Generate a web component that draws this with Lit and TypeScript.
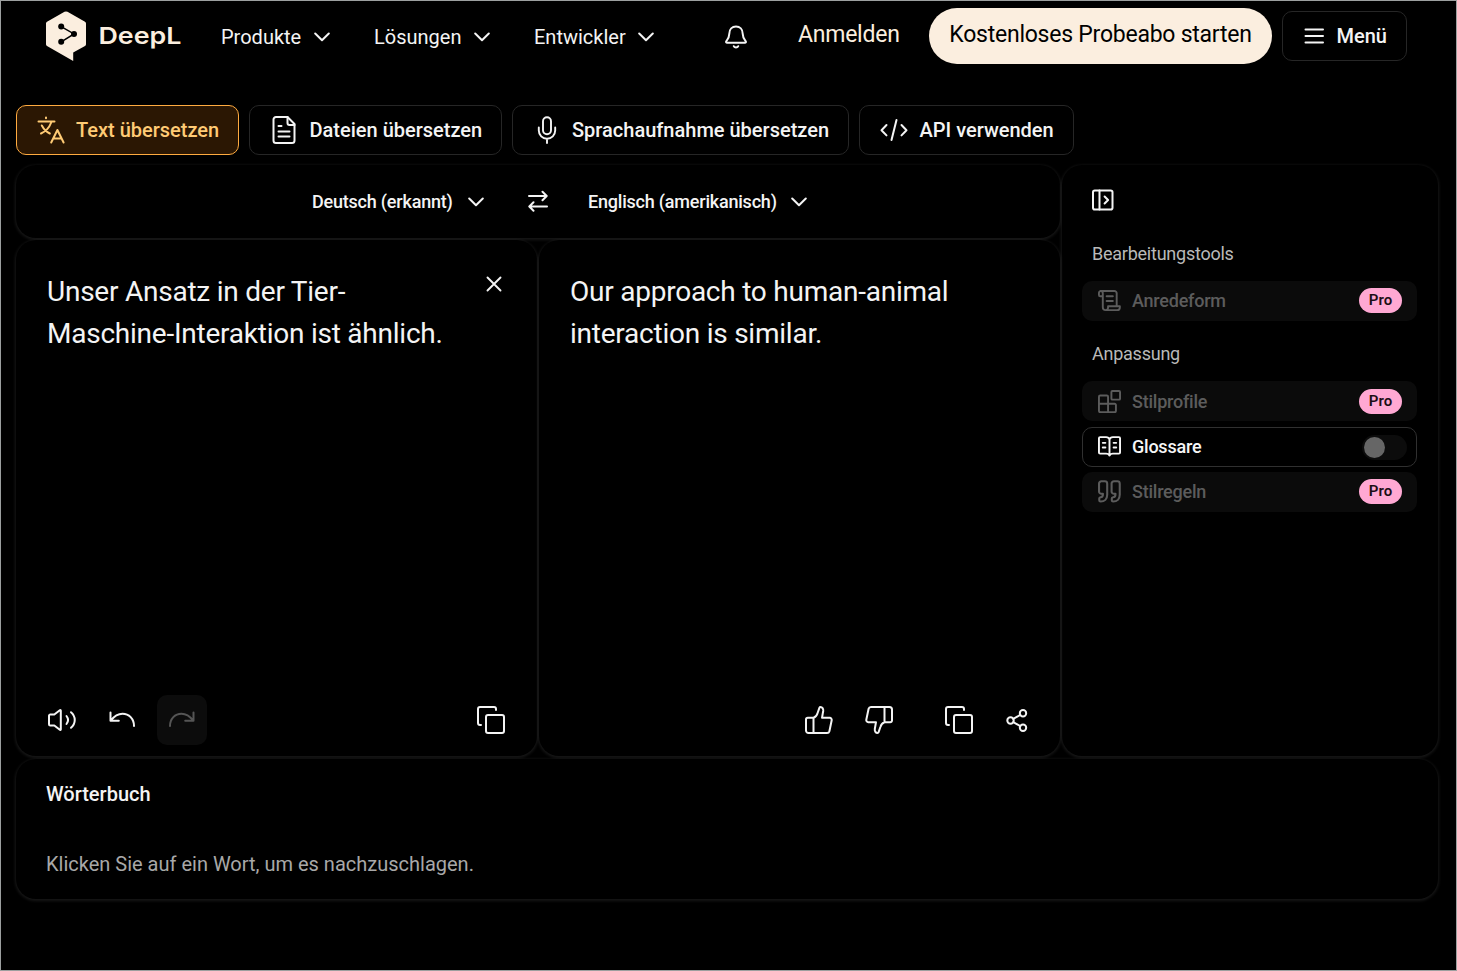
import { LitElement, html, css, svg } from "lit";
import { customElement, property } from "lit/decorators.js";

const ICONS: Record<string, { box: string; body: unknown }> = {
  chevron: { box: "0 0 16 10", body: svg`<path d="M1.2 1.5 8 8.200l6.800-6.700"/>` },
  bell: {
    box: "0 0 22 24",
    body: svg`<path d="M1.300 16.200C2.700 14.300 4.300 12.500 4.300 8.700 4.300 4.300 7.200 1.500 11 1.500s6.700 2.800 6.700 7.200c0 3.800 1.600 5.600 3 7.500.5.800.1 1.600-.8 1.600H2.100c-.9 0-1.300-.8-.8-1.600Z"/><path d="M8.800 21.200c.5.900 1.300 1.300 2.200 1.300s1.700-.4 2.200-1.300"/>`,
  },
  menu: { box: "0 0 20 16", body: svg`<path d="M1.500 1.500h17.500M1.500 8h17.500M1.500 14.500h17.500"/>` },
  translate: {
    box: "0 0 28 28",
    body: svg`<path d="M1.500 5.500h16M9 1.600v.6M14.200 6.500C12.500 11 8.500 15.500 4 17.500M4.800 9.500c2 3.700 4.700 6.500 8 8M14.200 26.500l6.200-12.500L26.600 26.500M16.500 22.500h7.800"/>`,
  },
  file: {
    box: "0 0 24 28",
    body: svg`<path d="M15.500 1H4a2.500 2.500 0 0 0-2.500 2.500v21A2.500 2.500 0 0 0 4 27h16a2.500 2.500 0 0 0 2.500-2.500V8L15.500 1Z"/><path d="M15.500 1v6a2 2 0 0 0 2 2h5M6.500 10h3M6.500 15.500h11M6.500 20.500h11"/>`,
  },
  mic: {
    box: "0 0 20 28",
    body: svg`<rect x="6" y="1.200" width="8" height="17" rx="4"/><path d="M1.800 11.500v3a8.200 8.200 0 0 0 16.400 0v-3M10 22.800V27"/>`,
  },
  code: { box: "0 0 28 24", body: svg`<path d="m6.500 7-5 5.200 5 5.200M21.500 7l5 5.200-5 5.200M16.500 2l-5 20"/>` },
  swap: { box: "0 0 20 22", body: svg`<path d="M1 6h17.500M14.500 1.800 18.700 6l-4.200 4.200M19 16.500H1.500M5.500 12.300 1.300 16.500l4.200 4.200"/>` },
  close: { box: "0 0 16 16", body: svg`<path d="m1.500 1.500 13 13M14.500 1.500l-13 13"/>` },
  collapse: {
    box: "0 0 22 22",
    body: svg`<rect x="1" y="1.500" width="19.500" height="19" rx="1.800"/><path d="M7.500 1.500v19M12.600 7.500l3.500 3.500-3.500 3.500"/>`,
  },
  scroll: {
    box: "0 0 24 22",
    body: svg`<path d="M5 6.500V18a3 3 0 0 0 3 3h12a2.800 2.800 0 0 0 2.800-2.800V17H10.500v1.500A2.500 2.500 0 0 1 8 21M5 6.500H2.300A1.300 1.300 0 0 1 1 5.200V3.500A2.300 2.300 0 0 1 3.200 1H17a2.500 2.500 0 0 1 2.500 2.500V17M3 1c1.300 0 2 1 2 2.500v3M9 6.500h6.500M9 11.500h6.500"/>`,
  },
  blocks: {
    box: "0 0 24 24",
    body: svg`<rect x="14" y="1" width="9" height="9" rx="1"/><path d="M10.500 23.200V7A1.300 1.300 0 0 0 9.200 5.700H2.300A1.300 1.300 0 0 0 1 7v14.700a1.500 1.500 0 0 0 1.500 1.500h14.700a1.500 1.500 0 0 0 1.500-1.500v-6.100a1.300 1.300 0 0 0-1.300-1.300H1"/>`,
  },
  book: {
    box: "0 0 24 22",
    body: svg`<path d="M12 3.800v16.500M12 3.800C11.500 2 10 1.200 8.500 1.200H2.200A1.200 1.200 0 0 0 1 2.400v14.800a1.200 1.200 0 0 0 1.200 1.200h6.300c1.600 0 2.800.7 3.500 2 .7-1.300 1.900-2 3.500-2h6.300a1.200 1.200 0 0 0 1.200-1.200V2.400a1.200 1.200 0 0 0-1.200-1.200h-6.300C14 1.200 12.500 2 12 3.800ZM5 7.200h2.700M5 12h2.700M16.300 7.200H19M16.300 12H19"/>`,
  },
  quote: {
    box: "0 0 22 22",
    body: svg`<path d="M3.200 1.200h3.300A2.300 2.300 0 0 1 8.800 3.500V14c0 4.200-2.600 6.600-6.300 6.600-.8 0-1.300-.4-1.300-1.200v-1.600c0-.8.5-1.200 1.300-1.300 1.400-.2 2.200-1 2.200-2.700v-.6H3.200A2.200 2.200 0 0 1 1 11V3.400a2.200 2.200 0 0 1 2.200-2.200ZM15.200 1.200h3.300a2.300 2.300 0 0 1 2.300 2.300V14c0 4.200-2.600 6.600-6.300 6.600-.8 0-1.300-.4-1.300-1.200v-1.600c0-.8.5-1.200 1.300-1.300 1.400-.2 2.200-1 2.200-2.700v-.6h-1.500A2.200 2.200 0 0 1 13 11V3.400a2.200 2.200 0 0 1 2.200-2.200Z"/>`,
  },
  speaker: {
    box: "0 0 28 24",
    body: svg`<path d="M2.300 6.500h4l5.500-4.300c.5-.4 1-.1 1 .5v18.500c0 .6-.5 1-1 .6L6.300 17.500h-4A1.300 1.300 0 0 1 1 16.200V7.800A1.300 1.300 0 0 1 2.300 6.500ZM18.500 8c1.800 2.300 1.800 5.700 0 8M23 4.200c5 4.300 5 11.300 0 15.600"/>`,
  },
  undo: { box: "0 0 26 18", body: svg`<path d="M1.500 1.500v8.300h8.300M1.800 9.500C5.500 4.800 9.500 2.700 13.500 2.700c6.500 0 11.500 5 11.500 12.300"/>` },
  redo: { box: "0 0 26 18", body: svg`<path d="M24.500 1.500v8.300h-8.300M24.200 9.500C20.500 4.800 16.500 2.700 12.500 2.700 6 2.700 1 7.700 1 15"/>` },
  copy: {
    box: "0 0 28 28",
    body: svg`<rect x="9" y="9" width="18" height="18" rx="2"/><path d="M4 19H3a2 2 0 0 1-2-2V3a2 2 0 0 1 2-2h14a2 2 0 0 1 2 2v1"/>`,
  },
  up: {
    box: "0 0 28 28",
    body: svg`<path d="M8.500 11.800H2.800A1.800 1.800 0 0 0 1 13.600v10.900A2.500 2.500 0 0 0 3.500 27H22a2.500 2.500 0 0 0 2.400-1.800l2.300-11a2 2 0 0 0-2-2.400H17L18.200 5c.3-2.200-1-4-2.700-4-.6 0-.9.300-1.100.8L12.600 7c-.7 2.700-2 4.200-4.100 4.800ZM8.500 11.800V27"/>`,
  },
  down: {
    box: "0 0 28 28",
    body: svg`<path d="M19.500 16.200h5.700a1.800 1.800 0 0 0 1.800-1.800V3.500A2.500 2.500 0 0 0 24.500 1H6a2.500 2.500 0 0 0-2.400 1.800l-2.300 11a2 2 0 0 0 2 2.400H11L9.800 23c-.3 2.200 1 4 2.700 4 .6 0 .9-.3 1.100-.8l1.800-5.200c.7-2.700 2-4.200 4.100-4.800ZM19.500 16.200V1"/>`,
  },
  share: {
    box: "0 0 22 24",
    body: svg`<circle cx="17" cy="5.200" r="3.200"/><circle cx="4.500" cy="12.500" r="3.200"/><circle cx="17" cy="19.800" r="3.200"/><path d="m7.300 10.800 7-3.900M7.300 14.200l7 3.900"/>`,
  },
};

@customElement("ui-icon")
export class UiIcon extends LitElement {
  @property() name = "chevron";

  static styles = css`
    :host { display: block; flex: none; }
    .icon { display: block; width: 100%; height: 100%; fill: none; stroke: currentColor; stroke-width: var(--stroke, 2); stroke-linecap: round; stroke-linejoin: round; }
  `;

  render() {
    const icon = ICONS[this.name];
    return html`<svg class="icon" viewBox=${icon.box} aria-hidden="true">${icon.body}</svg>`;
  }
}

@customElement("app-root")
export class AppRoot extends LitElement {
  static styles = css`
    :host { display: block; font-family: Roboto, "Liberation Sans", sans-serif; color: #f4f4f4; }
    * { box-sizing: border-box; }
    .page { height: 971px; border: 1px solid #9c9f9f; background: #000; overflow: hidden; padding-left: 15px; white-space: nowrap; }
    .header { display: flex; align-items: flex-start; height: 104px; padding-left: 30px; font-size: 20px; line-height: 30px; }
    .mark { width: 40px; height: 50px; margin-top: 10px; flex: none; }
    .brand { width: 123px; height: 40px; margin: 15px 0 0 12px; overflow: visible; flex: none; }
    .word { font: 600 23.500px Inter, sans-serif; fill: #fbeedf; }
    .nav { display: flex; align-items: center; justify-content: space-between; margin-top: 21px; height: 30px; flex: none; }
    .n1 { width: 108.500px; }
    .n2 { width: 115.500px; margin-left: 44.500px; }
    .n3 { width: 119.500px; margin-left: 44.500px; }
    .chev { width: 16px; height: 10px; --stroke: 2; }
    .bell { width: 22px; height: 24px; margin: 23.500px 0 0 71px; --stroke: 2; }
    .login { width: 102px; margin: 19px 0 0 51.500px; font-size: 23px; letter-spacing: -0.24px; color: #fbeedf; flex: none; }
    .cta { width: 343px; height: 56px; margin: 7px 0 0 29px; border-radius: 28px; background: #fbeedf; color: #000; font-size: 23px; letter-spacing: -0.24px; line-height: 54px; text-align: center; flex: none; }
    .menu { display: flex; align-items: center; width: 125px; height: 50px; margin: 10px 0 0 10px; padding-left: 21px; border: 1px solid #262626; border-radius: 10px; font-weight: 500; flex: none; }
    .burger { width: 20px; height: 16px; margin-right: 12.500px; --stroke: 2; }
    .tabs { display: flex; gap: 10px; height: 60px; font-size: 20px; font-weight: 500; }
    .tab { display: flex; align-items: center; height: 50px; border: 1px solid #262626; border-radius: 10px; padding-left: 20px; }
    .t1 { width: 223px; background: #2b1703; border-color: #ffab40; color: #ffcb75; }
    .t2 { width: 253px; padding-left: 22px; }
    .t3 { width: 337px; padding-left: 24px; }
    .t4 { width: 215px; }
    .i1 { width: 28px; height: 28px; margin-right: 11px; }
    .i2 { width: 24px; height: 28px; margin-right: 13.500px; }
    .i3 { width: 20px; height: 28px; margin-right: 15px; --stroke: 1.9; }
    .i4 { width: 28px; height: 24px; margin-right: 11.500px; --stroke: 2; }
    .work { display: grid; grid-template-columns: 521px 521px 376px; grid-template-rows: 73px 516px 141px; column-gap: 2px; row-gap: 2px; }
    .card { border-radius: 20px; background: #000; box-shadow: 0 1px 3px 1px rgba(255, 255, 255, 0.09); }
    .langs { grid-column: 1 / 3; display: flex; align-items: center; padding-left: 296px; font-size: 18px; font-weight: 500; letter-spacing: -0.21px; }
    .l1 { width: 155.500px; }
    .l2 { width: 202.500px; }
    .swap { width: 20px; height: 22px; margin: 0 40px 1px 44.500px; --stroke: 2; }
    .side { grid-column: 3; grid-row: 1 / 3; padding: 24px 21px 0 20px; }
    .collapse { width: 22px; height: 22px; margin-left: 10px; --stroke: 2; }
    .heading { margin: 31px 0 15px 10px; color: #b9b9b9; font-size: 18px; line-height: 24px; letter-spacing: -0.24px; }
    .second { margin-top: 21px; }
    .tool { display: flex; align-items: center; height: 40px; margin-bottom: 5px; padding: 0 15px 1px; border-radius: 10px; background: #0b0b0b; color: #5c5c5c; font-size: 18px; font-weight: 500; line-height: 21px; letter-spacing: -0.23px; }
    .gap { margin-bottom: 6px; padding-bottom: 0; }
    .on { background: #000; border: 1px solid #303030; color: #f6f6f6; padding: 0 9px 1px 14px; }
    .ti { width: 23px; height: 23px; margin: 0 11px 0 1px; --stroke: 2; }
    .pro { margin-left: auto; width: 43px; height: 25px; border-radius: 13px; background: #ffa8d3; color: #1c0e15; text-align: center; font-size: 15px; font-weight: 600; line-height: 25px; letter-spacing: 0; }
    .switch { margin: 1px 0 0 auto; width: 45px; height: 25px; padding: 2px; border-radius: 13px; background: #0c0c0c; }
    .knob { width: 21px; height: 21px; border-radius: 50%; background: #666; }
    .pane { display: flex; flex-direction: column; justify-content: space-between; padding: 31px 31px 11px; }
    .row { display: flex; justify-content: space-between; }
    .text { margin: 0; font-size: 28px; line-height: 42px; letter-spacing: -0.235px; }
    .close { width: 16px; height: 16px; margin: 4.500px 4.500px 0 0; --stroke: 1.9; }
    .actions { display: flex; align-items: center; height: 50px; }
    .speaker { width: 28px; height: 24px; margin-left: 1px; --stroke: 2; }
    .undo { width: 26px; height: 18px; margin-left: 33px; --stroke: 2; }
    .redobox { display: grid; place-items: center; width: 50px; height: 50px; margin-left: 22px; border-radius: 10px; background: #0c0c0c; color: #555; }
    .redo { width: 26px; height: 18px; --stroke: 2; }
    .copy { width: 28px; height: 28px; margin: 0 1px 0 auto; --stroke: 2; }
    .right { justify-content: flex-end; padding-right: 1px; }
    .thumb { width: 28px; height: 28px; margin-right: 33px; --stroke: 2; }
    .second-thumb { width: 28px; height: 28px; margin: 0 33px 0 -1px; --stroke: 2; }
    .rcopy { width: 28px; height: 28px; margin: 0 33px 0 19px; --stroke: 2; }
    .share { width: 22px; height: 24px; --stroke: 2; }
    .dict { grid-column: 1 / 4; margin-top: 1px; padding: 20px 30px; font-size: 20px; line-height: 30px; }
    .title { font-weight: 500; margin-bottom: 40px; }
    .hint { color: #a8a8a8; }
  `;

  private tool(name: string, label: string, extra = "") {
    return html`<div class="tool ${extra}"><ui-icon class="ti" name=${name}></ui-icon><span>${label}</span><span class="pro">Pro</span></div>`;
  }

  render() {
    return html`
      <div class="page">
        <header class="header">
          <svg class="mark" viewBox="0 0 40 50.500" preserveAspectRatio="none">
            <path fill="#fbeedf" d="M18.500.8q1.500-.8 3 0L39 10.800q1 .6 1 1.700v21q0 1.200-1 1.800L27.200 42v8.500L1 35.300q-1-.6-1-1.800v-21q0-1.100 1-1.700Z"/>
            <path d="m15.200 15.700 12.800 7.500-12.800 7.900" fill="none" stroke="#000" stroke-width="1.500"/>
            <circle cx="15.200" cy="15.700" r="3"/><circle cx="28" cy="23.200" r="3"/><circle cx="15.200" cy="31.100" r="3"/>
          </svg>
          <svg class="brand" viewBox="0 0 123 40"><text class="word" x="0.500" y="27.500" textLength="83" lengthAdjust="spacingAndGlyphs">DeepL</text></svg>
          <div class="nav n1"><span>Produkte</span><ui-icon class="chev"></ui-icon></div>
          <div class="nav n2"><span>Lösungen</span><ui-icon class="chev"></ui-icon></div>
          <div class="nav n3"><span>Entwickler</span><ui-icon class="chev"></ui-icon></div>
          <ui-icon class="bell" name="bell"></ui-icon>
          <span class="login">Anmelden</span>
          <span class="cta">Kostenloses Probeabo starten</span>
          <span class="menu"><ui-icon class="burger" name="menu"></ui-icon>Menü</span>
        </header>
        <nav class="tabs">
          <span class="tab t1"><ui-icon class="i1" name="translate"></ui-icon>Text übersetzen</span>
          <span class="tab t2"><ui-icon class="i2" name="file"></ui-icon>Dateien übersetzen</span>
          <span class="tab t3"><ui-icon class="i3" name="mic"></ui-icon>Sprachaufnahme übersetzen</span>
          <span class="tab t4"><ui-icon class="i4" name="code"></ui-icon>API verwenden</span>
        </nav>
        <main class="work">
          <section class="card langs">
            <span class="l1">Deutsch (erkannt)</span><ui-icon class="chev"></ui-icon>
            <ui-icon class="swap" name="swap"></ui-icon>
            <span class="l2">Englisch (amerikanisch)</span><ui-icon class="chev"></ui-icon>
          </section>
          <aside class="card side">
            <ui-icon class="collapse" name="collapse"></ui-icon>
            <div class="heading">Bearbeitungstools</div>
            ${this.tool("scroll", "Anredeform")}
            <div class="heading second">Anpassung</div>
            ${this.tool("blocks", "Stilprofile", "gap")}
            <div class="tool on"><ui-icon class="ti" name="book"></ui-icon><span>Glossare</span><span class="switch"><div class="knob"></div></span></div>
            ${this.tool("quote", "Stilregeln")}
          </aside>
          <section class="card pane">
            <div class="row">
              <p class="text">Unser Ansatz in der Tier-<br>Maschine-Interaktion ist ähnlich.</p>
              <ui-icon class="close" name="close"></ui-icon>
            </div>
            <div class="actions">
              <ui-icon class="speaker" name="speaker"></ui-icon>
              <ui-icon class="undo" name="undo"></ui-icon>
              <span class="redobox"><ui-icon class="redo" name="redo"></ui-icon></span>
              <ui-icon class="copy" name="copy"></ui-icon>
            </div>
          </section>
          <section class="card pane">
            <p class="text">Our approach to human-animal<br>interaction is similar.</p>
            <div class="actions right">
              <ui-icon class="thumb" name="up"></ui-icon>
              <ui-icon class="second-thumb" name="down"></ui-icon>
              <ui-icon class="rcopy" name="copy"></ui-icon>
              <ui-icon class="share" name="share"></ui-icon>
            </div>
          </section>
          <section class="card dict">
            <div class="title">Wörterbuch</div>
            <div class="hint">Klicken Sie auf ein Wort, um es nachzuschlagen.</div>
          </section>
        </main>
      </div>
    `;
  }
}
